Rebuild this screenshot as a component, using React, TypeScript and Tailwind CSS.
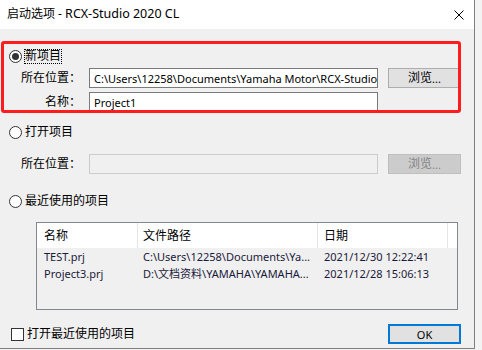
import React from "react";

const FONT = "'Noto Sans', 'Noto Sans CJK SC', sans-serif";

function Radio({ checked }: { checked?: boolean }) {
  return (
    <span className="w-[13px] h-[13px] rounded-full border border-[#333333] bg-white flex items-center justify-center shrink-0">
      {checked && <span className="w-[7px] h-[7px] rounded-full bg-[#333333]" />}
    </span>
  );
}

function Label({ text }: { text: string }) {
  return <span className="w-[81px] text-right shrink-0 whitespace-nowrap">{text}</span>;
}

export default function App() {
  return (
    <div className="w-[482px] h-[350px] bg-[#f3f3f3] overflow-hidden text-black" style={{ fontFamily: FONT }}>
      <div className="relative w-[475px] h-[349px] border-r border-b border-[#7f7f7f] bg-[#f0f0f0] flex flex-col text-[12px] leading-none">
        {/* Title bar */}
        <div className="h-[29px] bg-white flex items-center pl-[7px] shrink-0">
          <span className="text-[12px]">
            启动选项 - <span className="text-[12.5px]">RCX-Studio 2020 CL</span>
          </span>
          <svg className="ml-auto mr-[10px]" width="10" height="10" viewBox="0 0 10 10">
            <path d="M0.5 0.5 L9.5 9.5 M9.5 0.5 L0.5 9.5" stroke="#000" strokeWidth="1" />
          </svg>
        </div>

        {/* 新项目 */}
        <div className="mt-[19px] h-[16px] flex items-center pl-[9px]">
          <Radio checked />
          <span className="ml-[2px] border border-dotted border-black h-[15px] flex items-center">新项目</span>
        </div>
        <div className="mt-[4px] h-[20px] flex items-center">
          <Label text="所在位置：" />
          <div className="ml-[8px] w-[289px] h-[20px] border border-[#7a7a7a] bg-white pl-[4px] flex items-center overflow-hidden whitespace-nowrap shrink-0 text-[11px]">
            {"C:\\Users\\12258\\Documents\\Yamaha Motor\\RCX-Studio 2020 CL"}
          </div>
          <button className="ml-[10px] w-[73px] h-[20px] bg-[#e1e1e1] border border-[#adadad] flex items-center justify-center shrink-0">
            浏览<span className="text-[11px]">...</span>
          </button>
        </div>
        <div className="mt-[4px] h-[20px] flex items-center">
          <Label text="名称：" />
          <div className="ml-[8px] w-[289px] h-[20px] border border-[#7a7a7a] bg-white pl-[4px] flex items-center overflow-hidden whitespace-nowrap shrink-0 text-[11px]">
            Project1
          </div>
        </div>

        {/* 打开项目 */}
        <div className="mt-[12px] h-[16px] flex items-center pl-[9px]">
          <Radio />
          <span className="ml-[3px]">打开项目</span>
        </div>
        <div className="mt-[14px] h-[20px] flex items-center">
          <Label text="所在位置：" />
          <div className="ml-[8px] w-[289px] h-[20px] border border-[#cccccc] bg-[#f0f0f0] shrink-0" />
          <button className="ml-[10px] w-[73px] h-[20px] bg-[#cccccc] border border-[#bfbfbf] text-[#838383] flex items-center justify-center shrink-0">
            浏览<span className="text-[11px]">...</span>
          </button>
        </div>

        {/* 最近使用的项目 */}
        <div className="mt-[19px] h-[16px] flex items-center pl-[9px]">
          <Radio />
          <span className="ml-[3px]">最近使用的项目</span>
        </div>
        <div className="mt-[13px] ml-[36px] w-[422px] h-[88px] border border-[#828790] bg-[#f0f0f0] flex flex-col shrink-0">
          <div className="h-[25px] bg-white flex shrink-0">
            <div className="w-[101px] border-r border-[#e5e5e5] pl-[7px] flex items-center">名称</div>
            <div className="w-[180px] border-r border-[#e5e5e5] pl-[5px] flex items-center">文件路径</div>
            <div className="w-[130px] border-r border-[#e5e5e5] pl-[6px] flex items-center">日期</div>
            <div className="flex-1" />
          </div>
          <div className="h-[17px] flex items-center text-[#1a1a3a] whitespace-nowrap text-[11px]">
            <div className="w-[101px] pl-[7px]">TEST.prj</div>
            <div className="w-[180px] pl-[5px] overflow-hidden">{"C:\\Users\\12258\\Documents\\Ya..."}</div>
            <div className="w-[130px] pl-[6px]">2021/12/30 12:22:41</div>
          </div>
          <div className="h-[17px] flex items-center text-[#1a1a3a] whitespace-nowrap text-[11px]">
            <div className="w-[101px] pl-[7px]">Project3.prj</div>
            <div className="w-[180px] pl-[5px] pr-[3px] overflow-hidden text-ellipsis">
              {"D:\\文档资料\\YAMAHA\\YAMAHA..."}
            </div>
            <div className="w-[130px] pl-[6px]">2021/12/28 15:06:13</div>
          </div>
        </div>

        {/* Bottom row */}
        <div className="mt-[14px] h-[20px] flex items-center pl-[11px] pr-[13px]">
          <span className="w-[13px] h-[13px] border border-[#333333] bg-white shrink-0" />
          <span className="ml-[3px]">打开最近使用的项目</span>
          <button className="ml-auto w-[73px] h-[20px] bg-[#e1e1e1] border-2 border-[#0078d7] flex items-center justify-center text-[11px]">
            OK
          </button>
        </div>

        {/* Red annotation box */}
        <div className="absolute left-[1px] top-[41px] w-[460px] h-[72px] border-[3px] border-[#fe1c1c] rounded-[3px] pointer-events-none" />
      </div>
    </div>
  );
}
